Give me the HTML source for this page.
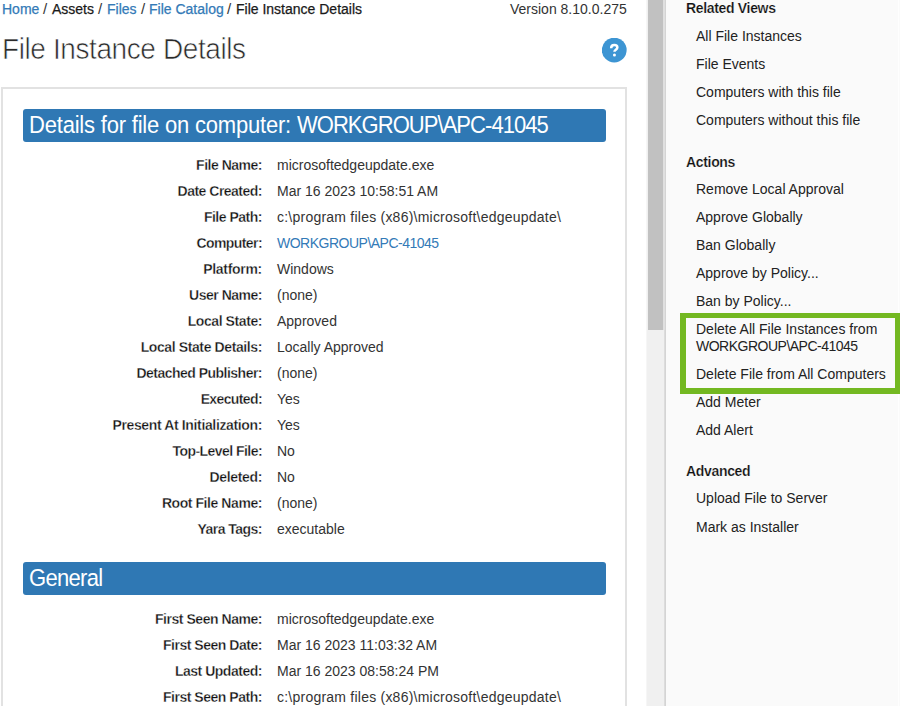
<!DOCTYPE html>
<html><head><meta charset="utf-8">
<style>
*{box-sizing:border-box;margin:0;padding:0}
html,body{width:900px;height:706px;overflow:hidden;background:#fff;font-family:"Liberation Sans",sans-serif;color:#333}
.abs{position:absolute;white-space:nowrap}
a{color:#337ab7;text-decoration:none}
.crumb{top:1px;font-size:14px;line-height:17px;color:#1a1a1a;-webkit-text-stroke:0.25px currentColor}
.crumb.sl{color:#333;-webkit-text-stroke:0;font-size:15px;top:0px}
#ver{left:510px;top:1px;font-size:14px;line-height:17px;color:#333}
#title{left:2px;top:34px;font-size:28px;line-height:32px;color:#2a2a2a;letter-spacing:-0.4px;-webkit-text-stroke:0.6px #fff;transform:scaleY(1.07);transform-origin:0 26px}
#help{left:602px;top:38px}
#card{left:1px;top:87px;width:626px;height:700px;border:2px solid #e2e2e2;background:#fff}
.hdr{position:absolute;left:23px;width:583px;height:33px;background:#2f78b4;border-radius:3px;color:#fff;font-size:22px;line-height:33px;padding-left:6px;white-space:nowrap}
.ht{display:inline-block;transform:scaleY(1.07);transform-origin:0 23px}
.row{position:absolute;left:0;width:620px;height:26px;font-size:14px;line-height:17px;white-space:nowrap}
.row .l{position:absolute;right:358px;top:1px;font-weight:bold;color:#111;text-align:right;letter-spacing:-0.33px;-webkit-text-stroke:0.3px #fff}
.row .v{position:absolute;left:277px;top:1px;color:#333}
#sbt{left:646px;top:0;width:18px;height:706px;background:#f0f0f0;border-left:1px solid #f6f6f6}
#sb{left:648px;top:0;width:15px;height:330px;background:#c1c1c1}
#sbs{left:663px;top:0;width:2px;height:330px;background:#e0e0e0}
#sbl{left:664px;top:330px;width:1px;height:376px;background:#dcdcdc}
#sbe{left:665px;top:0;width:1px;height:706px;background:#d4d4d4}
#panel{left:666px;top:0;width:234px;height:706px;background:#fafafa}
.ph{position:absolute;left:686px;font-size:14px;line-height:17px;font-weight:bold;color:#111;white-space:nowrap;letter-spacing:-0.33px;-webkit-text-stroke:0.2px #fafafa}
.pi{position:absolute;left:696px;font-size:14px;line-height:17px;color:#222;white-space:nowrap}
#green{left:680px;top:313px;width:220px;height:81px;border:solid #73b821;border-width:5px 5px 6px 6px}
</style></head><body>
<div class="abs crumb" style="left:2px"><a>Home</a></div>
<div class="abs crumb sl" style="left:43px">/</div>
<div class="abs crumb" style="left:52px">Assets</div>
<div class="abs crumb sl" style="left:98px">/</div>
<div class="abs crumb" style="left:107px"><a>Files</a></div>
<div class="abs crumb sl" style="left:141px">/</div>
<div class="abs crumb" style="left:149px"><a>File Catalog</a></div>
<div class="abs crumb sl" style="left:227px">/</div>
<div class="abs crumb" style="left:236px">File Instance Details</div>
<div class="abs" id="ver">Version 8.10.0.275</div>
<div class="abs" id="title">File Instance Details</div>
<svg class="abs" id="help" width="26" height="26" viewBox="0 0 26 26"><g transform="translate(-0.55,-0.7)"><circle cx="12.8" cy="12.8" r="12.4" fill="#3d95d3"/><path d="M9.7,10.9 C9.7,8.9 11.1,7.8 12.9,7.8 C14.7,7.8 15.9,8.9 15.9,10.3 C15.9,12.4 13,12.6 13,14.4" fill="none" stroke="#fff" stroke-width="2.5"/><circle cx="13" cy="17.6" r="1.5" fill="#fff"/></g></svg>

<div class="abs" id="card"></div>
<div class="hdr" style="top:109px;letter-spacing:-0.2px"><span class="ht">Details for file on computer: <span style="letter-spacing:-0.95px">WORKGROUP\APC-41045</span></span></div>
<div class="row" style="top:156px"><span class="l" style="letter-spacing:-0.49px">File Name:</span><span class="v">microsoftedgeupdate.exe</span></div>
<div class="row" style="top:182px"><span class="l" style="letter-spacing:-0.51px">Date Created:</span><span class="v">Mar 16 2023 10:58:51 AM</span></div>
<div class="row" style="top:208px"><span class="l" style="letter-spacing:-0.49px">File Path:</span><span class="v" style="letter-spacing:0.23px">c:\program files (x86)\microsoft\edgeupdate\</span></div>
<div class="row" style="top:234px"><span class="l" style="letter-spacing:-0.59px">Computer:</span><span class="v" style="letter-spacing:-0.5px"><a>WORKGROUP\APC-41045</a></span></div>
<div class="row" style="top:260px"><span class="l" style="letter-spacing:-0.29px">Platform:</span><span class="v">Windows</span></div>
<div class="row" style="top:286px"><span class="l" style="letter-spacing:-0.49px">User Name:</span><span class="v">(none)</span></div>
<div class="row" style="top:312px"><span class="l" style="letter-spacing:-0.42px">Local State:</span><span class="v">Approved</span></div>
<div class="row" style="top:338px"><span class="l" style="letter-spacing:-0.39px">Local State Details:</span><span class="v">Locally Approved</span></div>
<div class="row" style="top:364px"><span class="l" style="letter-spacing:-0.52px">Detached Publisher:</span><span class="v">(none)</span></div>
<div class="row" style="top:390px"><span class="l" style="letter-spacing:-0.62px">Executed:</span><span class="v">Yes</span></div>
<div class="row" style="top:416px"><span class="l" style="letter-spacing:-0.36px">Present At Initialization:</span><span class="v">Yes</span></div>
<div class="row" style="top:442px"><span class="l" style="letter-spacing:-0.55px">Top-Level File:</span><span class="v">No</span></div>
<div class="row" style="top:468px"><span class="l" style="letter-spacing:-0.34px">Deleted:</span><span class="v">No</span></div>
<div class="row" style="top:494px"><span class="l" style="letter-spacing:-0.43px">Root File Name:</span><span class="v">(none)</span></div>
<div class="row" style="top:520px"><span class="l" style="letter-spacing:-0.53px">Yara Tags:</span><span class="v">executable</span></div>

<div class="hdr" style="top:562px;letter-spacing:-0.7px"><span class="ht">General</span></div>
<div class="row" style="top:610px"><span class="l" style="letter-spacing:-0.46px">First Seen Name:</span><span class="v">microsoftedgeupdate.exe</span></div>
<div class="row" style="top:636px"><span class="l" style="letter-spacing:-0.47px">First Seen Date:</span><span class="v">Mar 16 2023 11:03:32 AM</span></div>
<div class="row" style="top:662px"><span class="l" style="letter-spacing:-0.48px">Last Updated:</span><span class="v">Mar 16 2023 08:58:24 PM</span></div>
<div class="row" style="top:688px"><span class="l" style="letter-spacing:-0.47px">First Seen Path:</span><span class="v" style="letter-spacing:0.23px">c:\program files (x86)\microsoft\edgeupdate\</span></div>

<div class="abs" id="sbt"></div>
<div class="abs" id="sb"></div>
<div class="abs" id="sbs"></div>
<div class="abs" id="sbl"></div>
<div class="abs" id="sbe"></div>
<div class="abs" id="panel"></div>
<div class="abs" style="left:898px;top:0;width:1px;height:706px;background:#fefefe"></div>

<div class="ph" style="top:0px">Related Views</div>
<div class="pi" style="top:28px">All File Instances</div>
<div class="pi" style="top:56px">File Events</div>
<div class="pi" style="top:84px">Computers with this file</div>
<div class="pi" style="top:112px">Computers without this file</div>

<div class="ph" style="top:154px">Actions</div>
<div class="pi" style="top:181px">Remove Local Approval</div>
<div class="pi" style="top:209px">Approve Globally</div>
<div class="pi" style="top:237px">Ban Globally</div>
<div class="pi" style="top:265px">Approve by Policy...</div>
<div class="pi" style="top:293px">Ban by Policy...</div>
<div class="pi" style="top:321px">Delete All File Instances from</div>
<div class="pi" style="top:338px;letter-spacing:-0.5px">WORKGROUP\APC-41045</div>
<div class="pi" style="top:366px">Delete File from All Computers</div>
<div class="pi" style="top:394px">Add Meter</div>
<div class="pi" style="top:422px">Add Alert</div>

<div class="ph" style="top:463px">Advanced</div>
<div class="pi" style="top:490px">Upload File to Server</div>
<div class="pi" style="top:519px">Mark as Installer</div>

<div class="abs" id="green"></div>
</body></html>
